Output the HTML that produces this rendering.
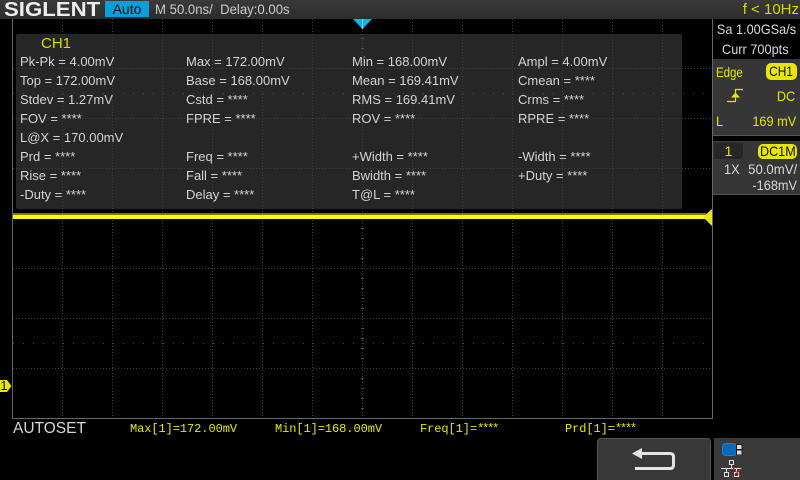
<!DOCTYPE html>
<html><head><meta charset="utf-8">
<style>
html,body{margin:0;padding:0;background:#000;width:800px;height:480px;overflow:hidden}
body{position:relative;font-family:"Liberation Sans",sans-serif}
.a{position:absolute;white-space:pre;line-height:16px}
.m{font-size:13px;color:#d4d4d4}
.y{color:#e6e600}
.r{font-size:14px;color:#d8d8d8;transform:scaleX(.91);transform-origin:0 0}
.e{transform-origin:100% 0}
.f{font-family:"Liberation Mono",monospace;font-size:12px;color:#e6e600;letter-spacing:-.07px}
.f b{font-weight:normal;letter-spacing:-2.2px}
.i{display:inline-block;transform:scaleX(.85)}
</style></head><body>
<div class="a" style="left:0;top:0;width:800px;height:19px;background:linear-gradient(#3a3a3a,#2c2c2c)"></div>
<div class="a" style="left:4px;top:1px;font-size:20px;line-height:18px;font-weight:bold;color:#eee;transform-origin:0 0;transform:scaleX(1.11)">SIGLENT</div>
<div class="a" style="left:105px;top:1px;width:44px;height:16px;background:#0a9fd8;color:#111;font-size:14px;text-align:center">Auto</div>
<div class="a" style="left:155px;top:1px;font-size:14px;color:#ccc;transform-origin:0 0;transform:scaleX(.94)">M 50.0ns/  Delay:0.00s</div>
<div class="a" style="right:1px;top:1px;font-size:15px;line-height:18px;color:#d8d800">f &lt; 10Hz</div>

<div class="a" style="left:16px;top:34px;width:666px;height:175px;background:#262626;border-radius:2px"></div>

<svg class="a" style="left:0;top:0" width="800" height="480">
<g stroke="#3f3f3f" stroke-width="1" stroke-dasharray="1 2" fill="none">
<path d="M62.5 19V418M112.5 19V418M162.5 19V418M212.5 19V418M262.5 19V418M312.5 19V418M412.5 19V418M462.5 19V418M512.5 19V418M562.5 19V418M612.5 19V418M662.5 19V418"/>
<path d="M362.5 19V418"/>
<path d="M13 68.5H712M13 118.5H712M13 168.5H712M13 218.5H712M13 268.5H712M13 318.5H712M13 368.5H712"/>
</g>
<path d="M361 28.5H364M361 38.5H364M361 48.5H364M361 58.5H364M361 228.5H364M361 238.5H364M361 248.5H364M361 258.5H364M361 278.5H364M361 288.5H364M361 298.5H364M361 308.5H364M361 328.5H364M361 338.5H364M361 348.5H364M361 358.5H364M361 378.5H364M361 388.5H364M361 398.5H364M361 408.5H364" stroke="#4a4a4a"/>
<path d="M13 93.5H712M13 343.5H712" stroke="#4a4a4a" stroke-dasharray="1 9"/>
<path d="M12.5 19V418.5H712.5V19" stroke="#666" fill="none"/>
</svg>

<div class="a m y" style="left:41px;top:36px;font-size:15px;color:#dcdc00">CH1</div>

<div class="a m" style="left:20px;top:54px">Pk-Pk = 4.00mV</div>
<div class="a m" style="left:186px;top:54px">Max = 172.00mV</div>
<div class="a m" style="left:352px;top:54px">Min = 168.00mV</div>
<div class="a m" style="left:518px;top:54px">Ampl = 4.00mV</div>

<div class="a m" style="left:20px;top:73px">Top = 172.00mV</div>
<div class="a m" style="left:186px;top:73px">Base = 168.00mV</div>
<div class="a m" style="left:352px;top:73px">Mean = 169.41mV</div>
<div class="a m" style="left:518px;top:73px">Cmean = ****</div>

<div class="a m" style="left:20px;top:92px">Stdev = 1.27mV</div>
<div class="a m" style="left:186px;top:92px">Cstd = ****</div>
<div class="a m" style="left:352px;top:92px">RMS = 169.41mV</div>
<div class="a m" style="left:518px;top:92px">Crms = ****</div>

<div class="a m" style="left:20px;top:111px">FOV = ****</div>
<div class="a m" style="left:186px;top:111px">FPRE = ****</div>
<div class="a m" style="left:352px;top:111px">ROV = ****</div>
<div class="a m" style="left:518px;top:111px">RPRE = ****</div>

<div class="a m" style="left:20px;top:130px">L@X = 170.00mV</div>

<div class="a m" style="left:20px;top:149px">Prd = ****</div>
<div class="a m" style="left:186px;top:149px">Freq = ****</div>
<div class="a m" style="left:352px;top:149px">+Width = ****</div>
<div class="a m" style="left:518px;top:149px">-Width = ****</div>

<div class="a m" style="left:20px;top:168px">Rise = ****</div>
<div class="a m" style="left:186px;top:168px">Fall = ****</div>
<div class="a m" style="left:352px;top:168px">Bwidth = ****</div>
<div class="a m" style="left:518px;top:168px">+Duty = ****</div>

<div class="a m" style="left:20px;top:187px">-Duty = ****</div>
<div class="a m" style="left:186px;top:187px">Delay = ****</div>
<div class="a m" style="left:352px;top:187px">T@L = ****</div>

<svg class="a" style="left:0;top:0" width="800" height="480">
<path d="M353 19H372L362.5 29Z" fill="#12b4e8"/>
<path d="M362.5 19V29" stroke="#6fd8f5"/>
<rect x="13" y="213" width="693" height="2" fill="#7a7a10"/>
<rect x="13" y="215" width="693" height="4" fill="#ffff00"/>
<path d="M712 209V226L703 217Z" fill="#e6e620"/>
<path d="M0 380H7L11.5 386L7 392H0Z" fill="#e6e600"/>
</svg>
<div class="a" style="left:0;top:378px;width:8px;text-align:center;font-size:13px;color:#111">1</div>

<!-- right panels -->
<div class="a" style="left:713px;top:19px;width:87px;height:40px;background:#000"></div>
<div class="a r e" style="right:4px;top:21px">Sa 1.00GSa/s</div>
<div class="a r" style="left:722px;top:41px">Curr 700pts</div>

<div class="a" style="left:713px;top:59px;width:87px;height:76px;background:#363636;border-bottom:1px solid #555"></div>
<div class="a r" style="left:716px;top:64px;color:#e6e600;transform:scaleX(.82)">Edge</div>
<div class="a" style="left:766px;top:63px;width:31px;height:17px;background:#e6e600;border-radius:5px;color:#111;font-size:14px;text-align:center"><span class="i">CH1</span></div>
<svg class="a" style="left:725px;top:87px" width="20" height="16"><path d="M2 14.5H10.5V2.5H18" stroke="#e6e600" stroke-width="1.2" fill="none"/><path d="M6 10.5L10.5 5.5L15 10.5Z" fill="#e6e600"/></svg>
<div class="a r e" style="right:5px;top:88px;color:#e6e600">DC</div>
<div class="a r" style="left:716px;top:113px;color:#e6e600">L</div>
<div class="a r e" style="right:4px;top:113px;color:#e6e600">169 mV</div>

<div class="a" style="left:713px;top:141px;width:87px;height:53px;background:#363636;border-bottom:1px solid #555"></div>
<div class="a" style="left:714px;top:143px;width:29px;height:16px;background:#262626;border-radius:0 0 4px 0;color:#e6e600;font-size:14px;text-align:center">1</div>
<div class="a" style="left:758px;top:144px;width:39px;height:15px;line-height:15px;background:#e6e600;border-radius:5px;color:#111;font-size:14px;text-align:center"><span class="i" style="transform:scaleX(.9)">DC1M</span></div>
<div class="a r" style="left:724px;top:161px">1X</div>
<div class="a r e" style="right:3px;top:161px;transform:scaleX(.94)">50.0mV/</div>
<div class="a r e" style="right:3px;top:177px">-168mV</div>

<!-- bottom -->
<div class="a" style="left:13px;top:421px;font-size:15.5px;color:#d8d8d8">AUTOSET</div>
<div class="a f" style="left:130px;top:421px">Max[1]=172.00mV</div>
<div class="a f" style="left:275px;top:421px">Min[1]=168.00mV</div>
<div class="a f" style="left:420px;top:421px">Freq[1]=<b>****</b></div>
<div class="a f" style="left:565px;top:421px">Prd[1]=<b>****</b></div>

<div class="a" style="left:597px;top:438px;width:114px;height:42px;background:#383838;border:1px solid #555;border-bottom:0;border-radius:4px 4px 0 0;box-sizing:border-box"></div>
<svg class="a" style="left:597px;top:438px" width="114" height="42">
<path d="M44 15.5H73Q76.5 15.5 76.5 19V27Q76.5 30.5 73 30.5H38" stroke="#e4e4e4" stroke-width="3" fill="none"/>
<path d="M35 15.5L45 10V21Z" fill="#e4e4e4"/>
</svg>
<div class="a" style="left:714px;top:438px;width:86px;height:42px;background:#3a3a3a"></div>
<svg class="a" style="left:714px;top:438px" width="86" height="42">
<rect x="8.5" y="5.5" width="14" height="12" rx="3" fill="#0a6ab8" stroke="#1080e0"/>
<rect x="22" y="6" width="6.5" height="11" fill="#1d1d1d"/>
<rect x="23" y="7" width="4.5" height="4" fill="#ddd"/><rect x="23" y="12.5" width="4.5" height="4" fill="#ddd"/>
<g stroke="#e0e0e0" fill="none">
<rect x="15.5" y="22.5" width="4" height="4"/><rect x="10.5" y="34.5" width="4" height="4"/><rect x="20.5" y="34.5" width="4" height="4"/>
<path d="M17.5 27V30.5M7 30.5H27M12.5 30.5V34M22.5 30.5V34"/>
</g>
<path d="M18 39L28 30M19 30L27 39" stroke="#e02020" stroke-dasharray="2 1"/>
</svg>
</body></html>
